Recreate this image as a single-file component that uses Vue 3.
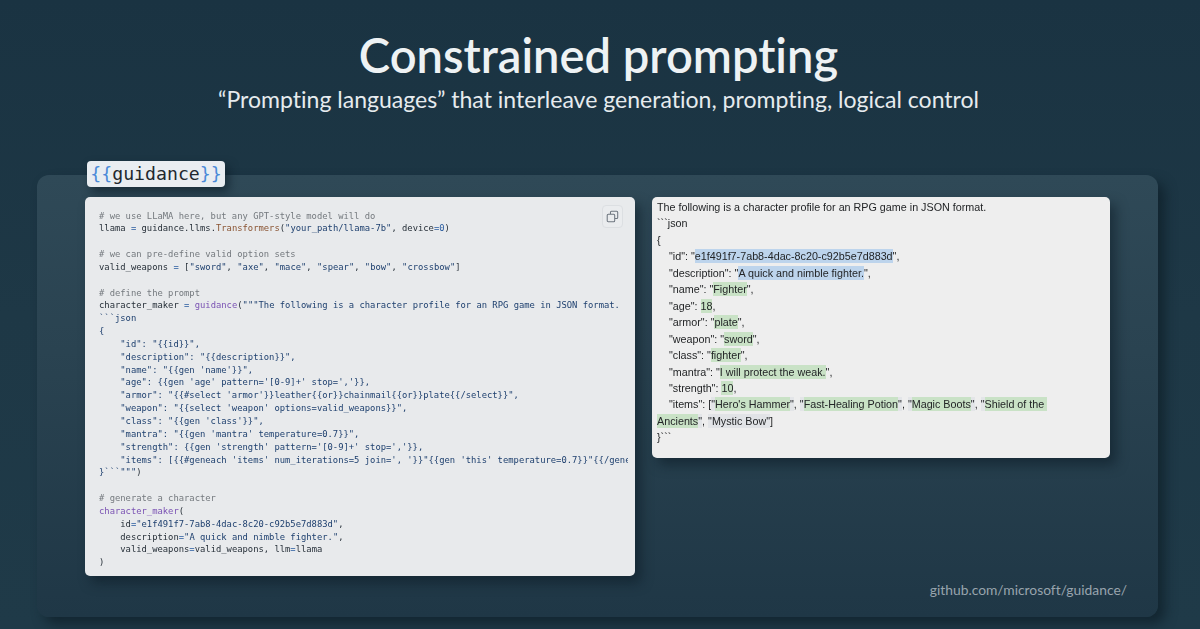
<script setup>
</script>

<template>
  <main class="slide">
    <header class="head">
      <h1>Constrained prompting</h1>
      <p>“Prompting languages” that interleave generation, prompting, logical control</p>
    </header>
    <section class="panel">
      <div class="badge" v-pre><b>{{</b>guidance<b>}}</b></div>
      <div class="row">
        <div class="code">
          <button class="copy" aria-label="Copy">
            <svg width="13" height="13" viewBox="0 0 16 16" fill="none" stroke="#6f7780" stroke-width="1.3">
              <path d="M5.5 5V2.8c0-.7.5-1.2 1.2-1.2h6.5c.7 0 1.2.5 1.2 1.2v6.5c0 .7-.5 1.2-1.2 1.2H11"/>
              <rect x="1.5" y="5.3" width="9.2" height="9.2" rx="1.2"/>
            </svg>
          </button>
          <pre v-pre><i># we use LLaMA here, but any GPT-style model will do</i>
llama <u>=</u> guidance.llms.<em>Transformers</em>(<s>"your_path/llama-7b"</s>, device<u>=0</u>)

<i># we can pre-define valid option sets</i>
valid_weapons <u>=</u> [<s>"sword"</s>, <s>"axe"</s>, <s>"mace"</s>, <s>"spear"</s>, <s>"bow"</s>, <s>"crossbow"</s>]

<i># define the prompt</i>
character_maker <u>=</u> <var>guidance</var>(<s>"""The following is a character profile for an RPG game in JSON format.
```json
{
    "id": "{{id}}",
    "description": "{{description}}",
    "name": "{{gen 'name'}}",
    "age": {{gen 'age' pattern='[0-9]+' stop=','}},
    "armor": "{{#select 'armor'}}leather{{or}}chainmail{{or}}plate{{/select}}",
    "weapon": "{{select 'weapon' options=valid_weapons}}",
    "class": "{{gen 'class'}}",
    "mantra": "{{gen 'mantra' temperature=0.7}}",
    "strength": {{gen 'strength' pattern='[0-9]+' stop=','}},
    "items": [{{#geneach 'items' num_iterations=5 join=', '}}"{{gen 'this' temperature=0.7}}"{{/geneach}}]
}```"""</s>)

<i># generate a character</i>
<var>character_maker</var>(
    id<u>=</u><s>"e1f491f7-7ab8-4dac-8c20-c92b5e7d883d"</s>,
    description<u>=</u><s>"A quick and nimble fighter."</s>,
    valid_weapons<u>=</u>valid_weapons, llm<u>=</u>llama
)</pre>
        </div>
        <div class="output">
          <pre>The following is a character profile for an RPG game in JSON format.
```json
{
    "id": "<mark class="blue">e1f491f7-7ab8-4dac-8c20-c92b5e7d883d</mark>",
    "description": "<mark class="blue">A quick and nimble fighter.</mark>",
    "name": "<mark>Fighter</mark>",
    "age": <mark>18</mark>,
    "armor": "<mark>plate</mark>",
    "weapon": "<mark>sword</mark>",
    "class": "<mark>fighter</mark>",
    "mantra": "<mark>I will protect the weak.</mark>",
    "strength": <mark>10</mark>,
    "items": [<span class="q">"</span><mark>Hero's Hammer</mark><span class="q">"</span>, <span class="q">"</span><mark>Fast-Healing Potion</mark><span class="q">"</span>, <span class="q">"</span><mark>Magic Boots</mark><span class="q">"</span>, <span class="q">"</span><mark>Shield of the Ancients</mark><span class="q">"</span>, <span class="q">"</span><mark class="pale">Mystic Bow</mark><span class="q">"</span>]
}```</pre>
        </div>
      </div>
      <a class="link">github.com/microsoft/guidance/</a>
    </section>
  </main>
</template>

<style>
html, body { margin: 0; background: #1e3644; }
</style>

<style scoped>
.slide {
  width: 1200px;
  height: 629px;
  overflow: hidden;
  box-sizing: border-box;
  background: linear-gradient(180deg, #1a3342 0%, #1e3846 50%, #1f3a48 100%);
  padding: 0 42px 12px 37px;
  font-family: Lato, "Open Sans", sans-serif;
  font-variant-ligatures: none;
}
.head { text-align: center; height: 175px; padding-left: 2px; box-sizing: border-box; padding-top: 25px; }
h1 {
  margin: 0;
  font-size: 47.1px;
  line-height: 60px;
  font-weight: 600;
  color: #eef2f4;
}
.head p {
  margin: -2px 0 0;
  font-size: 23.05px;
  line-height: 32px;
  color: #e6ebee;
}
.panel {
  position: relative;
  height: 442px;
  box-sizing: border-box;
  padding: 22px 48px 0;
  border-radius: 12px;
  background: linear-gradient(180deg, #2f4957 0%, #2a4351 40%, #1f3746 100%);
  box-shadow: 7px 7px 12px rgba(13, 27, 37, .65);
}
.badge {
  position: absolute;
  left: 50px;
  top: -14px;
  width: 138px;
  height: 26px;
  border-radius: 4px;
  background: #e9edf1;
  box-shadow: 4px 5px 10px rgba(10, 24, 34, .55);
  font: 18.2px/26px "DejaVu Sans Mono", monospace;
  color: #22282e;
  text-align: center;
  white-space: nowrap;
}
.badge b { font-weight: 400; color: #4a8ad8; }
.row { display: flex; align-items: flex-start; gap: 17px; }
.code {
  position: relative;
  flex: none;
  width: 550px;
  height: 379px;
  box-sizing: border-box;
  padding: 12.5px 7px 0 14px;
  border-radius: 5px;
  background: #e8eaec;
  box-shadow: 6px 7px 12px rgba(10, 24, 34, .5);
  overflow: hidden;
}
.code pre {
  margin: 0;
  overflow: hidden;
  font: 8.84px/12.84px "DejaVu Sans Mono", monospace;
  color: #262f38;
  filter: blur(.2px);
}
.code i { font-style: normal; color: #74797e; }
.code u { text-decoration: none; color: #2a5c9f; }
.code s { text-decoration: none; color: #1d3f6e; }
.code em { font-style: normal; color: #8a5432; }
.code var { font-style: normal; color: #7a52b3; }
.copy {
  position: absolute;
  top: 8px;
  right: 12px;
  width: 21px;
  height: 23px;
  padding: 0;
  display: flex;
  align-items: center;
  justify-content: center;
  background: #eaecee;
  border: 1px solid #dcdfe2;
  border-radius: 4px;
}
.output {
  flex: none;
  width: 458px;
  height: 261px;
  box-sizing: border-box;
  padding: 2px 30px 0 5px;
  border-radius: 5px;
  background: #eeeeee;
  box-shadow: 6px 7px 12px rgba(10, 24, 34, .5);
}
.output pre {
  margin: 0;
  font: 10.76px/16.45px "Liberation Sans", Arial, sans-serif;
  color: #232527;
  white-space: pre-wrap;
  filter: blur(.2px);
}
mark { color: inherit; background: #c9e2c6; padding: 1px 0; }
mark.blue { background: #bdd4ec; }
mark.pale { background: #e1e3e6; }
.q { background: #e3e5e8; padding: 1px 0; }
.link {
  position: absolute;
  right: 31px;
  bottom: 17px;
  font-size: 13.85px;
  line-height: 20px;
  color: #98a4ad;
}
</style>
